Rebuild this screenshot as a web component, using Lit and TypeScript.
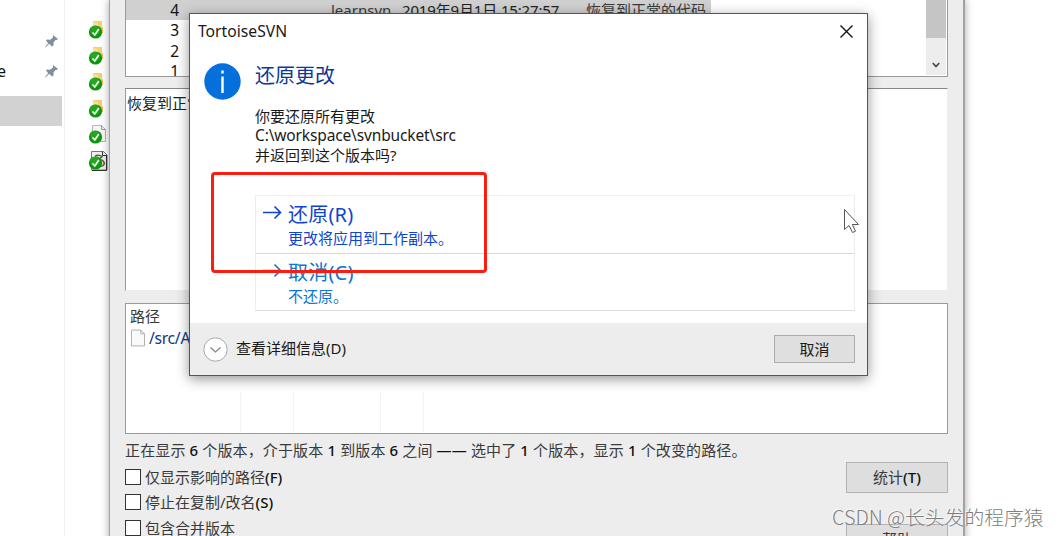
import { LitElement, html, css, svg } from "lit";
import { customElement, property } from "lit/decorators.js";

type FileKind = "folder" | "page" | "script";

@customElement("file-icon")
export class FileIcon extends LitElement {
  @property() kind: FileKind = "folder";

  static styles = css`
    :host {
      display: block;
      height: 26.2px;
    }
    svg {
      display: block;
    }
  `;

  private shape() {
    if (this.kind === "folder") {
      return svg`
        <path d="M5 1h9v13h-9z" fill="#f6cf70" />
        <path d="M5 2l5 1v11l-5-2z" fill="#fbe09a" />
        <path d="M13 8l2-1v6h-3z" fill="#f0bd55" />`;
    }
    if (this.kind === "script") {
      return svg`
        <path d="M3.5.5h12l3.500 3.500v15h-15.500z" fill="#eee" stroke="#777" />
        <path d="M18.500 4v15.500H4M14.500.5v4h4" fill="none" stroke="#333" />
        <path d="M7 5.500c2-2 6-1 7 0l-3 3c4 0 6 3 5 5-1 2-4 2-6 1" fill="#e2dfaa" stroke="#555" stroke-width="1.500" />`;
    }
    return svg`
      <path d="M4.500.5h9l4 4v12h-13z" fill="#f7f7f7" stroke="#b5b5b5" />
      <path d="M13.500.5v4h4" fill="none" stroke="#999" />`;
  }

  render() {
    return html`
      <svg width="22" height="21" viewBox="0 0 22 21">
        ${this.shape()}
        <circle cx="7.500" cy="12" r="6.600" fill="#0d960d" />
        <circle cx="7" cy="10.500" r="4.800" fill="#35b42d" opacity=".6" />
        <path d="M4.500 12.500l2.300 2.500 4-6" fill="none" stroke="#fff" stroke-width="1.600" />
      </svg>
    `;
  }
}

@customElement("explorer-pane")
export class ExplorerPane extends LitElement {
  static styles = css`
    :host {
      display: flex;
      height: 536px;
      background: #fff;
      font: 16px/20px "Noto Sans", sans-serif;
      color: #111;
    }
    .nav {
      box-sizing: border-box;
      width: 65px;
      padding-top: 26px;
      border-right: 1px solid #f1f1f1;
    }
    .row {
      display: flex;
      justify-content: space-between;
      align-items: center;
      width: 61px;
      height: 30px;
      margin-left: -3px;
    }
    .current {
      width: 62px;
      height: 30px;
      margin-top: 10px;
      background: #d2d2d2;
    }
    .files {
      padding: 20px 0 0 23px;
    }
  `;

  private pin() {
    return html`
      <svg width="13" height="13" viewBox="0 0 13 13">
        <path d="M8 0l5 4-1.500 1-1 0-2 2.500 0 3-1.500 1-2.800-2.800L.5 12.500 0 12l3.200-3.800L1 5.500 2 4.500l3.200.2L8 2.500z" fill="#7d909b" />
      </svg>
    `;
  }

  render() {
    const kinds: FileKind[] = ["folder", "folder", "folder", "folder", "page", "script"];
    return html`
      <div class="nav">
        <div class="row"><span></span>${this.pin()}</div>
        <div class="row"><span>e</span>${this.pin()}</div>
        <div class="current"></div>
      </div>
      <div class="files">${kinds.map((k) => html`<file-icon .kind=${k}></file-icon>`)}</div>
    `;
  }
}

@customElement("log-window")
export class LogWindow extends LitElement {
  static styles = css`
    :host {
      box-sizing: border-box;
      display: flex;
      flex-direction: column;
      width: 856px;
      height: 560px;
      padding: 0 15px;
      background: #ededed;
      border: solid #a2a2a2;
      border-width: 0 2px 0 1px;
      box-shadow: 0 0 8px rgba(0, 0, 0, 0.35);
      font: 15px/20px "Noto Sans", "Noto Sans CJK SC", sans-serif;
      color: #3a3a3a;
    }
    .box {
      box-sizing: border-box;
      flex-shrink: 0;
      background: #fff;
      border: 1px solid #9a9a9a;
      overflow: hidden;
    }
    .log {
      display: flex;
      height: 77px;
      border-top: 0;
    }
    .rows {
      flex: 1;
    }
    .row {
      display: grid;
      grid-template-columns: 53px 152px 71px 184px 1fr;
      height: 20.4px;
      white-space: pre;
    }
    .row.selected {
      width: 585px;
      background: #d0d0d0;
    }
    .num {
      font-size: 15.500px;
      text-align: right;
      color: #111;
    }
    .mark {
      padding-left: 9px;
    }
    .date {
      letter-spacing: -0.15px;
      color: #222;
    }
    .bar {
      display: flex;
      flex-direction: column;
      justify-content: space-between;
      align-items: center;
      width: 20px;
      height: 75px;
      margin-right: 1px;
      background: #ededed;
    }
    .thumb {
      width: 20px;
      height: 38px;
      background: #c5c5c5;
    }
    .bar svg {
      margin-bottom: 6px;
    }
    .message {
      height: 203px;
      margin-top: 11px;
      padding: 4px 1px;
      border-color: #888 #eee #eee #999;
      color: #222;
    }
    .paths {
      height: 131px;
      margin-top: 12px;
      padding: 2px 4px;
    }
    .path {
      display: flex;
      align-items: center;
      gap: 4px;
      height: 24px;
      padding-left: 1px;
      font-size: 15.700px;
      letter-spacing: -0.3px;
      color: #12348c;
    }
    .lines {
      display: grid;
      grid-template-columns: 111px 53px 87px 43px 1fr;
      height: 40px;
      margin-top: 42px;
    }
    .lines span {
      border-right: 1px solid #f3f3f3;
    }
    .status {
      margin-top: 6px;
      white-space: pre;
      letter-spacing: 0.13px;
    }
    b {
      font-weight: 500;
      color: #111;
    }
    .bottom {
      display: flex;
      justify-content: space-between;
      margin-top: 2px;
    }
    .check {
      display: flex;
      align-items: center;
      gap: 4px;
      height: 25.500px;
    }
    .check i {
      box-sizing: border-box;
      width: 16px;
      height: 16px;
      border: 1.500px solid #333;
      background: #fff;
    }
    .checks {
      padding-top: 2px;
    }
    .buttons {
      display: flex;
      flex-direction: column;
      gap: 31px;
    }
    .button {
      box-sizing: border-box;
      width: 102px;
      height: 31px;
      border: 1px solid #b3b3b3;
      background: #dedede;
      line-height: 28px;
      text-align: center;
    }
  `;

  private mark(selected = false) {
    return html`
      <svg width="20" height="20" viewBox="0 0 20 20">
        ${selected ? svg`<path d="M5.500 0v15h8V4l-3-3z" fill="#eaf4fa" stroke="#6b8793" />` : ""}
        <circle cx="7" cy="11" r="6.500" fill="#e00f0f" />
        <path d="M6 7h2.400v4H6zM6 13h2.400v2H6z" fill="#fff" />
      </svg>
    `;
  }

  render() {
    return html`
      <div class="box log">
        <div class="rows">
          <div class="row selected">
            <span class="num">4</span><span class="mark">${this.mark(true)}</span><span>learnsvn</span
            ><span class="date">2019年9月1日 15:27:57</span><span>恢复到正常的代码</span>
          </div>
          <div class="row"><span class="num">3</span><span class="mark">${this.mark()}</span></div>
          <div class="row"><span class="num">2</span><span class="mark">${this.mark()}</span></div>
          <div class="row"><span class="num">1</span></div>
        </div>
        <div class="bar">
          <div class="thumb"></div>
          <svg width="8" height="8" viewBox="0 0 8 8">
            <path d="M.8 2L4 5.500 7.200 2" fill="none" stroke="#444" stroke-width="1.600" />
          </svg>
        </div>
      </div>
      <div class="box message">恢复到正常的代码</div>
      <div class="box paths">
        <div>路径</div>
        <div class="path">
          <svg width="14" height="18" viewBox="0 0 15 18">
            <path d="M.5.5h10l4 4v13H.5z" fill="#fafafa" stroke="#aaa" />
            <path d="M10.500.5v4h4" fill="none" stroke="#aaa" />
          </svg>
          <span>/src/A</span>
        </div>
        <div class="lines"><span></span><span></span><span></span><span></span></div>
      </div>
      <div class="status">正在显示 <b>6</b> 个版本，介于版本 <b>1</b> 到版本 <b>6</b> 之间 <b>——</b> 选中了 <b>1</b> 个版本，显示 <b>1</b> 个改变的路径。</div>
      <div class="bottom">
        <div class="checks">
          <div class="check"><i></i><span>仅显示影响的路径<b>(F)</b></span></div>
          <div class="check"><i></i><span>停止在复制/改名<b>(S)</b></span></div>
          <div class="check"><i></i><span>包含合并版本</span></div>
        </div>
        <div class="buttons">
          <div class="button">统计<b>(T)</b></div>
          <div class="button">帮助</div>
        </div>
      </div>
    `;
  }
}

@customElement("revert-dialog")
export class RevertDialog extends LitElement {
  static styles = css`
    :host {
      box-sizing: border-box;
      display: flex;
      flex-direction: column;
      width: 679px;
      height: 363px;
      border: 1px solid #555;
      background: #fff;
      box-shadow: 0 3px 12px rgba(0, 0, 0, 0.42);
      font: 15px/20px "Noto Sans", "Noto Sans CJK SC", sans-serif;
      color: #1a1a1a;
    }
    .title {
      display: flex;
      justify-content: space-between;
      align-items: center;
      height: 34px;
      padding: 0 14px 0 8px;
      font-size: 15.700px;
    }
    .main {
      display: grid;
      grid-template-columns: 51px 1fr;
      flex: 1;
      padding: 14px 12px 0 14px;
    }
    .info {
      margin-top: 1px;
    }
    h1 {
      margin: 0;
      font-size: 20px;
      font-weight: 400;
      line-height: 28px;
      color: #0b3796;
    }
    .text {
      margin-top: 17px;
      line-height: 19.4px;
    }
    .path {
      font-size: 15.500px;
      letter-spacing: -0.14px;
    }
    .links {
      margin-top: 30px;
      border: 1px solid #e9eef2;
      border-top-color: #f0f0f0;
      border-bottom-color: #dedede;
    }
    .link {
      box-sizing: border-box;
      display: grid;
      grid-template-columns: 25px 1fr;
      height: 57px;
      padding: 7px 0 0 7px;
      color: #0d47d0;
    }
    .link + .link {
      border-top: 1px solid #d8d8d8;
      color: #0c75cf;
    }
    .link svg {
      margin-top: 1px;
    }
    .name {
      font-size: 20px;
      line-height: 24px;
      letter-spacing: 0.2px;
    }
    .hint {
      line-height: 22px;
    }
    .footer {
      display: flex;
      align-items: center;
      height: 52px;
      padding: 0 12px 0 13px;
      background: #ededed;
    }
    .more {
      flex: 1;
      margin-left: 8px;
      margin-top: -2px;
    }
    .button {
      box-sizing: border-box;
      width: 81px;
      height: 28px;
      border: 1px solid #adadad;
      background: #dfdfdf;
      line-height: 27px;
      text-align: center;
    }
  `;

  private link(name: string, hint: string) {
    return html`
      <div class="link">
        <svg width="19" height="16" viewBox="0 0 19 16">
          <path d="M0 8.500h17M11.500 2.500l6 6-6 6" fill="none" stroke="currentColor" stroke-width="1.600" />
        </svg>
        <div>
          <div class="name">${name}</div>
          <div class="hint">${hint}</div>
        </div>
      </div>
    `;
  }

  render() {
    return html`
      <div class="title">
        <span>TortoiseSVN</span>
        <svg width="13" height="13" viewBox="0 0 13 13">
          <path d="M.5.5l12 12M12.500.5l-12 12" stroke="#111" stroke-width="1.400" />
        </svg>
      </div>
      <div class="main">
        <svg class="info" width="37" height="37" viewBox="0 0 37 37">
          <circle cx="18.500" cy="18.500" r="18.200" fill="#0570dc" />
          <path d="M17.300 13.500h2.400V30h-2.400zM17.300 7.500h2.400v3h-2.400z" fill="#fff" />
        </svg>
        <div>
          <h1>还原更改</h1>
          <div class="text">
            <div>你要还原所有更改</div>
            <div class="path">C:\\workspace\\svnbucket\\src</div>
            <div>并返回到这个版本吗?</div>
          </div>
          <div class="links">
            ${this.link("还原(R)", "更改将应用到工作副本。")} ${this.link("取消(C)", "不还原。")}
          </div>
        </div>
      </div>
      <div class="footer">
        <svg width="25" height="25" viewBox="0 0 25 25">
          <circle cx="12.500" cy="12.500" r="11.700" fill="#fff" stroke="#aaa" />
          <path d="M7.500 10.500l5 4.500 5-4.500" fill="none" stroke="#888" stroke-width="1.300" />
        </svg>
        <span class="more">查看详细信息(D)</span>
        <div class="button">取消</div>
      </div>
    `;
  }
}

@customElement("app-root")
export class AppRoot extends LitElement {
  static styles = css`
    :host {
      display: block;
      position: relative;
      width: 1059px;
      height: 536px;
      overflow: hidden;
      background: #fff;
    }
    log-window,
    revert-dialog,
    .marker,
    .cursor,
    .watermark {
      position: absolute;
    }
    log-window {
      left: 109px;
      top: 0;
    }
    revert-dialog {
      left: 189px;
      top: 13px;
    }
    .marker {
      box-sizing: border-box;
      left: 211px;
      top: 172px;
      width: 276px;
      height: 101px;
      border: 3px solid #fb1d12;
      border-radius: 4px;
    }
    .cursor {
      left: 843px;
      top: 208px;
    }
    .watermark {
      left: 832px;
      top: 503px;
      font: 300 19.800px/28px "Noto Sans CJK SC", sans-serif;
      color: #808080;
      text-shadow: -1px -1px 0 rgba(255, 255, 255, 0.7);
      white-space: nowrap;
    }
  `;

  render() {
    return html`
      <explorer-pane></explorer-pane>
      <log-window></log-window>
      <revert-dialog></revert-dialog>
      <div class="marker"></div>
      <svg class="cursor" width="18" height="26" viewBox="0 0 18 26">
        <path d="M1.500 1.500v20l4.500-4 3.500 7 3-1.300-3.200-6.700h6.200z" fill="#fff" stroke="#555" />
      </svg>
      <div class="watermark">CSDN @长头发的程序猿</div>
    `;
  }
}
